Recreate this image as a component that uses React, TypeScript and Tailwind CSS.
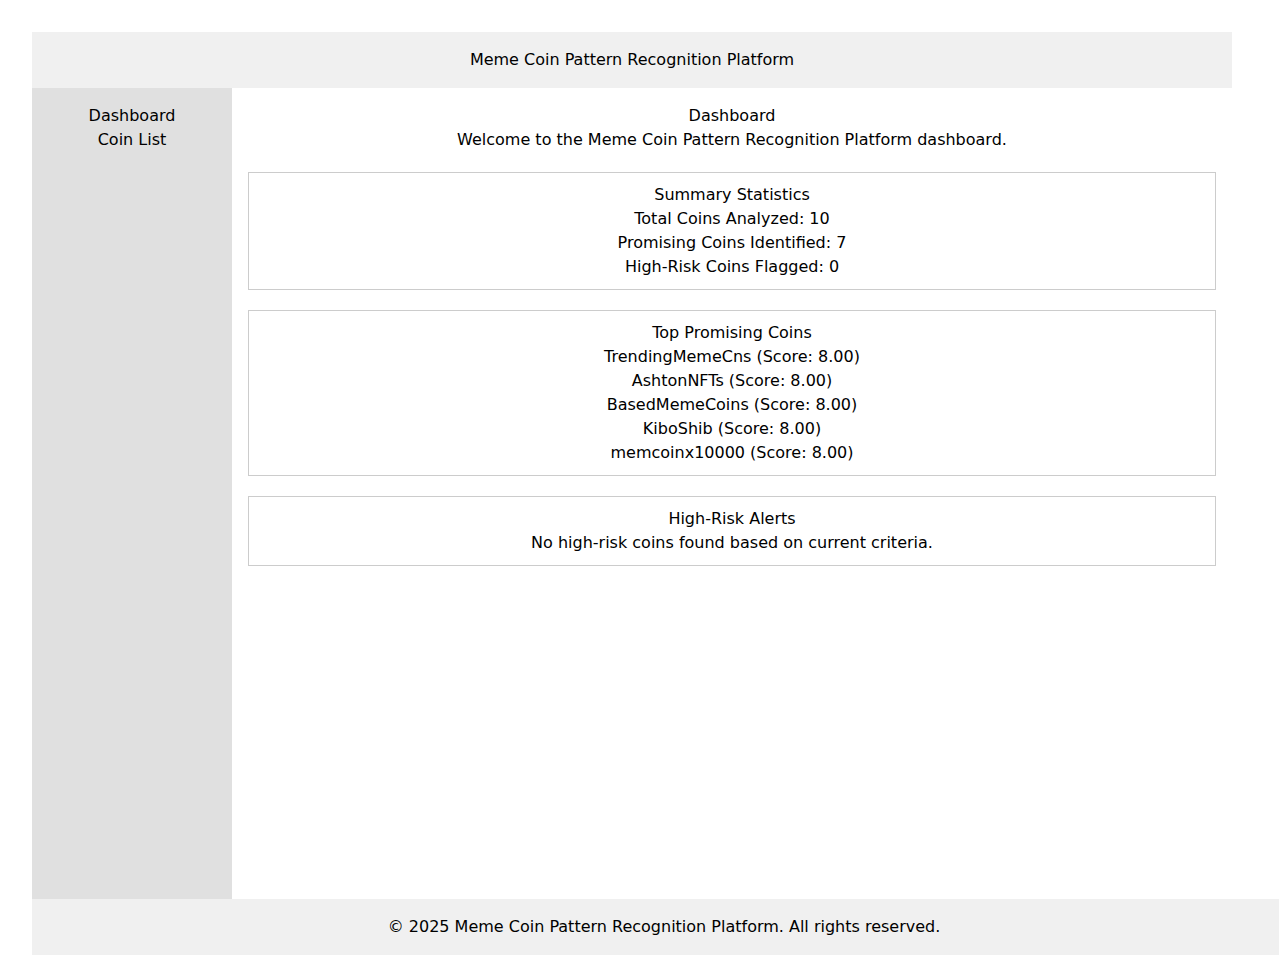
const promising = [
  { name: "TrendingMemeCns", score: 8 },
  { name: "AshtonNFTs", score: 8 },
  { name: "BasedMemeCoins", score: 8 },
  { name: "KiboShib", score: 8 },
  { name: "memcoinx10000", score: 8 },
];

export default function App() {
  return (
    <div className="min-h-screen overflow-x-hidden bg-white text-black text-center text-base leading-6 font-['DejaVu_Sans',sans-serif]">
      <div className="py-8 pl-8">
        <div className="w-[1200px]">
          <header className="bg-[#f0f0f0] py-4">Meme Coin Pattern Recognition Platform</header>
          <div className="flex h-[811px]">
            <nav className="w-[200px] shrink-0 bg-[#e0e0e0] py-4">
              <div>Dashboard</div>
              <div>Coin List</div>
            </nav>
            <main className="flex-1 p-4">
              <div>Dashboard</div>
              <p>Welcome to the Meme Coin Pattern Recognition Platform dashboard.</p>
              <section className="mt-5 border border-[#ccc] p-[10px]">
                <div>Summary Statistics</div>
                <div>Total Coins Analyzed: 10</div>
                <div>Promising Coins Identified: 7</div>
                <div>High-Risk Coins Flagged: 0</div>
              </section>
              <section className="mt-5 border border-[#ccc] p-[10px]">
                <div>Top Promising Coins</div>
                {promising.map((c) => (
                  <div key={c.name}>
                    {c.name} (Score: {c.score.toFixed(2)})
                  </div>
                ))}
              </section>
              <section className="mt-5 border border-[#ccc] p-[10px]">
                <div>High-Risk Alerts</div>
                <div>No high-risk coins found based on current criteria.</div>
              </section>
            </main>
          </div>
        </div>
        <footer className="w-[1264px] bg-[#f0f0f0] py-4">© 2025 Meme Coin Pattern Recognition Platform. All rights reserved.</footer>
      </div>
    </div>
  );
}
